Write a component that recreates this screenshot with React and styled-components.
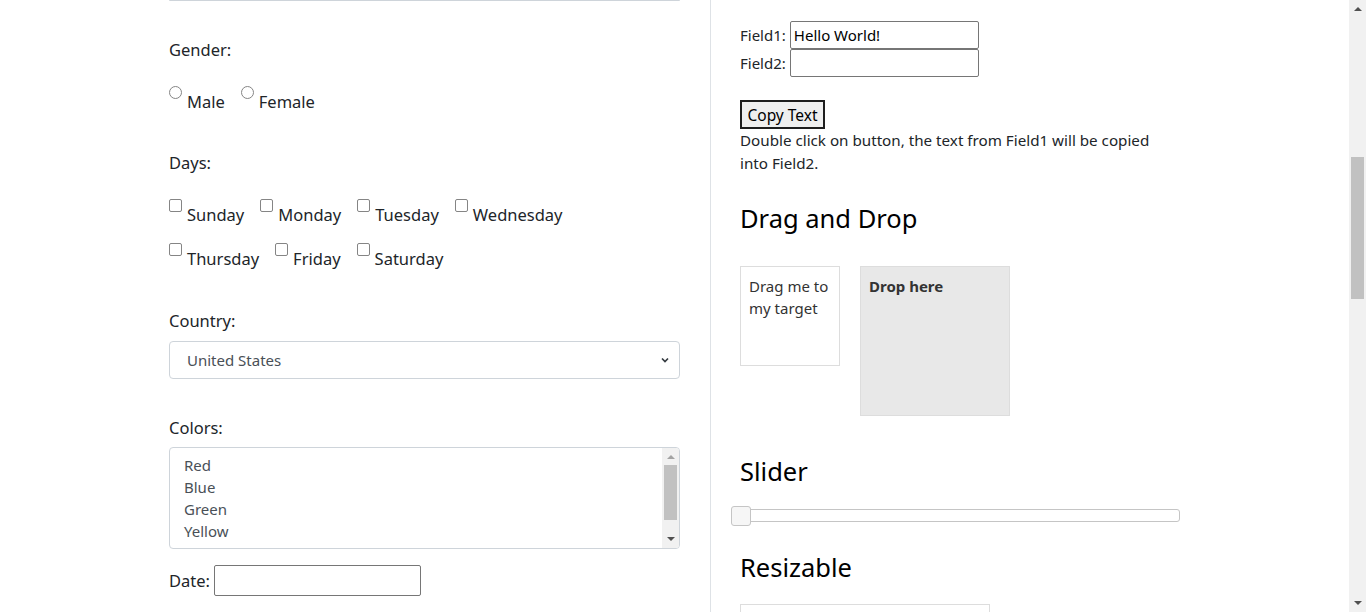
import React from "react";
import styled, { createGlobalStyle } from "styled-components";

const GlobalStyle = createGlobalStyle`
  html, body {
    margin: 0;
    padding: 0;
    overflow: hidden;
  }
  body {
    font-family: "Noto Sans", "Open Sans", sans-serif;
    color: #212529;
    background: #fff;
  }
  * { box-sizing: border-box; }
`;

const Viewport = styled.div`
  display: flex;
  width: 1366px;
  height: 612px;
  overflow: hidden;
`;

const Page = styled.div`
  flex: 1;
  display: flex;
  align-items: stretch;
`;

const LeftPane = styled.section`
  width: 710px;
  padding: 0 30px 0 169px;
  display: flex;
  flex-direction: column;
  align-items: flex-start;

  & > * { flex-shrink: 0; }
`;

const RightPane = styled.section`
  width: 470px;
  padding: 21px 0 0 29px;
  border-left: 1px solid #dee2e6;
  display: flex;
  flex-direction: column;
  align-items: flex-start;

  & > * { flex-shrink: 0; }
`;

const InputEdge = styled.div`
  width: 511px;
  height: 1px;
  background: #ced4da;
  border-radius: 0 0 3px 3px;
`;

const FieldLabel = styled.div`
  font-size: 16.5px;
  line-height: 24px;
  margin-top: ${(p) => p.$mt || 0}px;
`;

const OptionRow = styled.div`
  display: flex;
  gap: 16px;
  margin-top: ${(p) => p.$mt || 0}px;
`;

const Option = styled.label`
  display: flex;
  align-items: flex-start;
  gap: 5px;
`;

const Tick = styled.input`
  appearance: none;
  width: 13px;
  height: 13px;
  margin: 0;
  background: #fff;
  border: 1px solid #858585;
  border-radius: ${(p) => (p.type === "radio" ? "50%" : "2px")};
`;

const OptionText = styled.span`
  font-size: 16.5px;
  line-height: 24px;
  margin-top: 4px;
`;

const SelectBox = styled.div`
  width: 511px;
  height: 38px;
  margin-top: 8px;
  padding: 0 10px 0 17px;
  display: flex;
  align-items: center;
  justify-content: space-between;
  border: 1px solid #ced4da;
  border-radius: 4px;
  color: #495057;
  font-size: 15px;
`;

const ListBox = styled.div`
  width: 511px;
  height: 102px;
  margin-top: 7px;
  display: flex;
  border: 1px solid #ced4da;
  border-radius: 4px;
  overflow: hidden;
`;

const ListItems = styled.div`
  flex: 1;
  padding: 6px 14px;
  overflow: hidden;
`;

const ListItem = styled.div`
  font-size: 15px;
  line-height: 22px;
  color: #495057;
`;

const ScrollTrack = styled.div`
  width: ${(p) => p.$w}px;
  height: 100%;
  background: #f1f1f1;
  display: flex;
  flex-direction: column;
  align-items: center;
  flex-shrink: 0;
`;

const ArrowCell = styled.div`
  height: 17px;
  width: 100%;
  display: flex;
  align-items: center;
  justify-content: center;
  flex-shrink: 0;
`;

const Thumb = styled.div`
  width: 13px;
  height: ${(p) => p.$h}px;
  margin-top: ${(p) => p.$top}px;
  background: #c1c1c1;
  flex-shrink: 0;
`;

const TrackFill = styled.div`
  flex: 1;
`;

const DateRow = styled.div`
  display: flex;
  align-items: center;
  gap: 4px;
  margin-top: 16px;
`;

const DateText = styled.span`
  font-size: 16.5px;
`;

const PlainInput = styled.input`
  width: ${(p) => p.$w}px;
  height: ${(p) => p.$h}px;
  margin: 0;
  padding: 0 3px;
  border: 1px solid #767676;
  border-radius: 2px;
  font-family: inherit;
  font-size: 15px;
  color: #000;
`;

const FieldRow = styled.div`
  display: flex;
  align-items: center;
  gap: 4px;
  height: 28px;
  font-size: 15px;
`;

const CopyButton = styled.button`
  margin-top: 23px;
  width: 85px;
  height: 29px;
  padding: 0;
  border: 2px solid #1e1e1e;
  background: #efefef;
  font-family: inherit;
  font-size: 15.5px;
  color: #000;
`;

const Description = styled.p`
  margin: 0;
  max-width: 425px;
  font-size: 15.2px;
  line-height: 23px;
`;

const SectionTitle = styled.h2`
  margin: ${(p) => p.$mt}px 0 0;
  font-size: 25.5px;
  font-weight: 400;
  line-height: 32px;
  color: #000;
`;

const DragArea = styled.div`
  display: flex;
  align-items: flex-start;
  gap: 20px;
  margin-top: 32px;
`;

const DragBox = styled.div`
  width: ${(p) => p.$size}px;
  height: ${(p) => p.$size}px;
  padding: 8px;
  border: 1px solid #dddddd;
  background: ${(p) => p.$bg || "#fff"};
  font-size: 15px;
  line-height: 22px;
  font-weight: ${(p) => (p.$bold ? 700 : 400)};
  color: #333;
`;

const SliderTrack = styled.div`
  width: 440px;
  height: 13px;
  margin-top: 22px;
  display: flex;
  align-items: center;
  border: 1px solid #c5c5c5;
  border-radius: 3px;
  background: #fff;
`;

const SliderHandle = styled.div`
  width: 20px;
  height: 20px;
  margin-left: -10px;
  border: 1px solid #c5c5c5;
  border-radius: 3px;
  background: #f6f6f6;
  flex-shrink: 0;
`;

const ResizeBox = styled.div`
  width: 250px;
  height: 150px;
  margin-top: 21px;
  border: 1px solid #dddddd;
`;

const Arrow = ({ up, color }) => (
  <svg width="8" height="5" viewBox="0 0 8 5">
    <path d={up ? "M0 5 L4 1 L8 5 Z" : "M0 0 L8 0 L4 4 Z"} fill={color} />
  </svg>
);

const Chevron = () => (
  <svg width="8" height="6" viewBox="0 0 8 6">
    <path d="M1 1.5 L4 4.5 L7 1.5" fill="none" stroke="#343a40" strokeWidth="1.7" />
  </svg>
);

const genders = ["Male", "Female"];
const days1 = ["Sunday", "Monday", "Tuesday", "Wednesday"];
const days2 = ["Thursday", "Friday", "Saturday"];
const colors = ["Red", "Blue", "Green", "Yellow", "White", "Black"];

export default function App() {
  return (
    <Viewport>
      <GlobalStyle />
      <Page>
        <LeftPane>
          <InputEdge />
          <FieldLabel $mt={37}>Gender:</FieldLabel>
          <OptionRow $mt={24}>
            {genders.map((g) => (
              <Option key={g}>
                <Tick type="radio" name="gender" />
                <OptionText>{g}</OptionText>
              </Option>
            ))}
          </OptionRow>

          <FieldLabel $mt={37}>Days:</FieldLabel>
          <OptionRow $mt={24}>
            {days1.map((d) => (
              <Option key={d}>
                <Tick type="checkbox" />
                <OptionText>{d}</OptionText>
              </Option>
            ))}
          </OptionRow>
          <OptionRow $mt={16}>
            {days2.map((d) => (
              <Option key={d}>
                <Tick type="checkbox" />
                <OptionText>{d}</OptionText>
              </Option>
            ))}
          </OptionRow>

          <FieldLabel $mt={38}>Country:</FieldLabel>
          <SelectBox>
            <span>United States</span>
            <Chevron />
          </SelectBox>

          <FieldLabel $mt={37}>Colors:</FieldLabel>
          <ListBox>
            <ListItems>
              {colors.map((c) => (
                <ListItem key={c}>{c}</ListItem>
              ))}
            </ListItems>
            <ScrollTrack $w={17}>
              <ArrowCell>
                <Arrow up color="#a3a3a3" />
              </ArrowCell>
              <Thumb $h={55} $top={0} />
              <TrackFill />
              <ArrowCell>
                <Arrow color="#505050" />
              </ArrowCell>
            </ScrollTrack>
          </ListBox>

          <DateRow>
            <DateText>Date:</DateText>
            <PlainInput $w={207} $h={31} />
          </DateRow>
        </LeftPane>

        <RightPane>
          <FieldRow>
            <span>Field1:</span>
            <PlainInput $w={189} $h={28} defaultValue="Hello World!" />
          </FieldRow>
          <FieldRow>
            <span>Field2:</span>
            <PlainInput $w={189} $h={28} />
          </FieldRow>
          <CopyButton>Copy Text</CopyButton>
          <Description>
            Double click on button, the text from Field1 will be copied into Field2.
          </Description>

          <SectionTitle $mt={27}>Drag and Drop</SectionTitle>
          <DragArea>
            <DragBox $size={100}>Drag me to my target</DragBox>
            <DragBox $size={150} $bg="#e8e8e8" $bold>
              Drop here
            </DragBox>
          </DragArea>

          <SectionTitle $mt={39}>Slider</SectionTitle>
          <SliderTrack>
            <SliderHandle />
          </SliderTrack>

          <SectionTitle $mt={29}>Resizable</SectionTitle>
          <ResizeBox />
        </RightPane>
      </Page>

      <ScrollTrack $w={17}>
        <ArrowCell>
          <Arrow up color="#505050" />
        </ArrowCell>
        <Thumb $h={142} $top={140} />
        <TrackFill />
        <ArrowCell>
          <Arrow color="#505050" />
        </ArrowCell>
      </ScrollTrack>
    </Viewport>
  );
}
